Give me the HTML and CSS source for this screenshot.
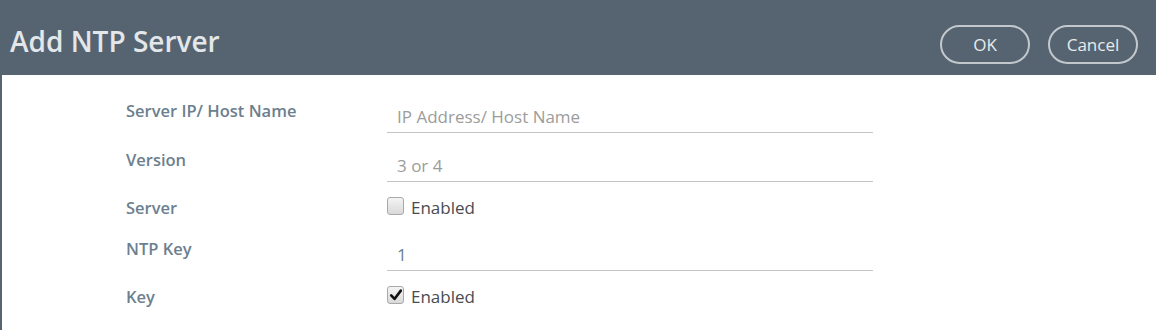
FILE: index.html
```html
<!DOCTYPE html>
<html lang="en">
<head>
  <meta charset="UTF-8" />
  <title>Add NTP Server</title>
  <link rel="stylesheet" href="styles.css">
</head>
<body>
  <div class="dialog">
    <div class="dialog-head">
      <h1>Add NTP Server</h1>
      <div class="actions">
        <button class="btn">OK</button>
        <button class="btn">Cancel</button>
      </div>
    </div>

    <div class="dialog-body">
      <div class="row">
        <label class="lbl">Server IP/ Host Name</label>
        <input class="field" placeholder="IP Address/ Host Name">
      </div>
      <div class="row">
        <label class="lbl">Version</label>
        <input class="field" placeholder="3 or 4">
      </div>
      <div class="row check-row">
        <label class="lbl">Server</label>
        <label class="check"><span class="box"></span>Enabled</label>
      </div>
      <div class="row">
        <label class="lbl">NTP Key</label>
        <input class="field" value="1">
      </div>
      <div class="row check-row">
        <label class="lbl">Key</label>
        <label class="check"><span class="box checked"><svg viewBox="0 0 16 16" width="14" height="14"><path d="M2.5 8.5 L6.3 12.5 L13.5 3" fill="none" stroke="#111" stroke-width="3" stroke-linecap="round" stroke-linejoin="round"/></svg></span>Enabled</label>
      </div>
    </div>
  </div>
</body>
</html>
```

FILE: styles.css
```css
:root {
  --head-bg: #566471;
  --label: #6c7f8f;
  --line: #c4c4c4;
}

body {
  margin: 0;
  font-family: "Open Sans", Lato, sans-serif;
  background: #fff;
}

.dialog {
  width: 1156px;
  height: 330px;
  box-sizing: border-box;
  border-left: 2px solid var(--head-bg);
}

.dialog-head {
  background: var(--head-bg);
  height: 75px;
  margin-left: -2px;
  display: flex;
  align-items: center;
  justify-content: space-between;
}

.dialog-head h1 {
  margin: 6px 0 0 10px;
  font-size: 28px;
  font-weight: 600;
  color: #e3e7ea;
}

.actions {
  display: flex;
  gap: 18px;
  margin-right: 18px;
  margin-top: 14px;
}

.btn {
  width: 90px;
  height: 39px;
  border: 2px solid #c3c8cc;
  border-radius: 20px;
  background: transparent;
  color: #e8ebed;
  font-family: inherit;
  font-size: 17px;
  cursor: pointer;
}

.dialog-body {
  padding-top: 21px;
  padding-left: 124px;
  display: flex;
  flex-direction: column;
  gap: 12px;
}

.row {
  display: flex;
  height: 37px;
}

.check-row {
  height: 28px;
}

.lbl {
  width: 261px;
  padding-top: 4px;
  line-height: 22px;
  font-size: 16.5px;
  font-weight: 600;
  color: var(--label);
}

.check-row .lbl {
  padding-top: 3px;
}

.field {
  width: 486px;
  height: 37px;
  box-sizing: border-box;
  border: none;
  border-bottom: 1px solid var(--line);
  padding: 5px 10px 0;
  font-family: inherit;
  font-size: 17px;
  color: #6b8096;
  outline: none;
}

.field::placeholder {
  color: #9c9c9c;
}

.check {
  display: flex;
  align-items: flex-start;
  gap: 7px;
  font-size: 17px;
  color: #474c52;
  line-height: 22px;
  padding-top: 3px;
}

.box {
  width: 15px;
  height: 16px;
  margin-top: 0;
  border: 1px solid #a9a9a9;
  border-radius: 3px;
  background: linear-gradient(#f4f4f4, #d9d9d9);
  display: flex;
  align-items: center;
  justify-content: center;
}
```
